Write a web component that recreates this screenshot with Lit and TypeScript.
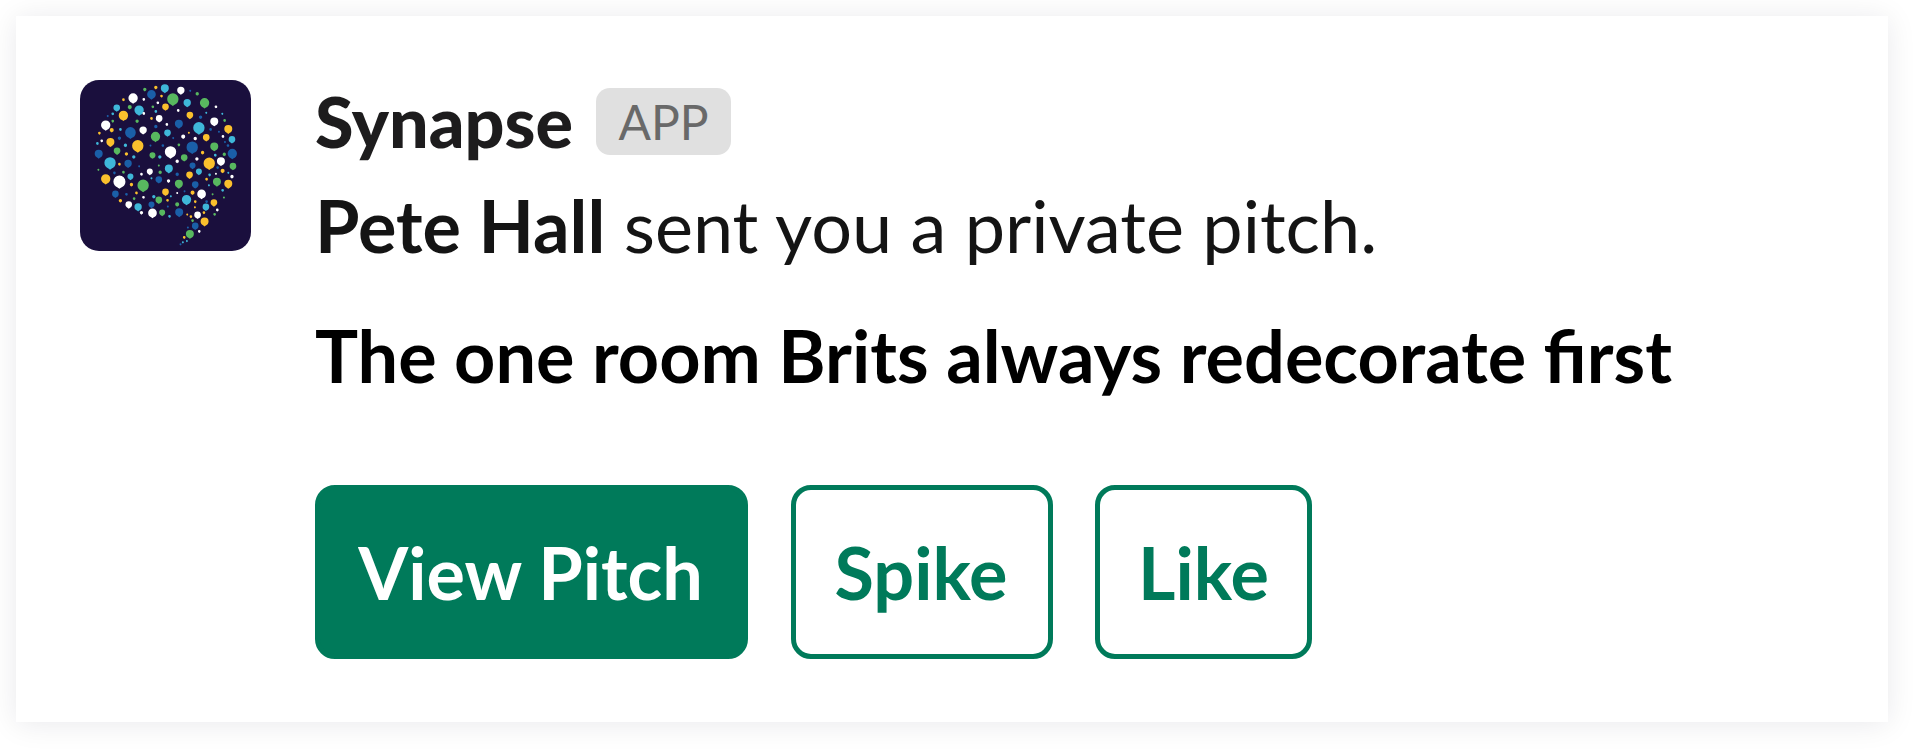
import { LitElement, html, css, svg } from "lit";
import { customElement } from "lit/decorators.js";

const COL: Record<string, string> = { W: "#ffffff", B: "#1a5fa8", C: "#3fb7d9", G: "#58b85f", Y: "#fbc02d" };
const DOTS: [number, number, number, string][] = [
[314,85,10,"C"],[362,91,9,"W"],[274,103,11,"B"],[338,117,15,"G"],[219,114,12,"W"],[433,128,12,"G"],[381,128,9,"C"],[170,143,8,"C"],[237,150,12,"C"],[190,166,12,"Y"],[316,140,8,"Y"],[389,165,8,"Y"],[297,175,8,"W"],[462,184,10,"W"],[137,195,12,"W"],[356,191,10,"B"],[416,203,15,"C"],[504,207,10,"Y"],[211,217,14,"B"],[249,210,9,"W"],[322,218,8,"C"],[286,229,12,"G"],[438,232,8,"Y"],[515,238,8,"C"],[151,246,10,"Y"],[233,257,15,"Y"],[396,261,15,"B"],[462,259,10,"G"],[116,281,10,"B"],[171,272,8,"G"],[331,275,15,"W"],[516,280,12,"B"],[277,285,7,"G"],[372,292,8,"G"],[150,308,15,"C"],[204,310,9,"B"],[447,309,15,"Y"],[482,303,10,"W"],[518,318,8,"G"],[326,325,10,"C"],[416,334,7,"C"],[269,334,7,"W"],[397,316,7,"B"],[388,344,8,"Y"],[137,356,12,"Y"],[178,364,16,"W"],[211,349,7,"C"],[249,375,15,"G"],[296,358,8,"B"],[356,371,10,"G"],[405,373,8,"B"],[470,365,10,"G"],[504,371,10,"Y"],[316,395,8,"Y"],[424,401,11,"W"],[166,401,8,"B"],[234,440,9,"C"],[206,433,8,"W"],[296,419,8,"G"],[379,418,12,"C"],[461,427,8,"Y"],[437,440,8,"C"],[277,458,11,"W"],[306,457,7,"G"],[357,456,10,"B"],[412,464,8,"W"],[433,484,10,"Y"],[405,497,8,"B"],[389,521,10,"G"],[274,433,7,"B"],
[254,88,4,"G"],[287,82,4,"Y"],[411,101,4,"G"],[390,92,2,"B"],
[190,119,3,"Y"],[251,118,3,"W"],[304,108,3,"Y"],[293,128,3,"W"],[278,140,3,"G"],[209,141,5,"G"],[251,160,3,"W"],[287,154,3,"C"],[158,161,3,"C"],[143,168,2,"B"],[274,175,3,"Y"],[354,151,3,"W"],[438,158,2,"C"],[467,140,3,"W"],[486,161,2,"C"],[421,171,4,"B"],[493,181,3,"G"],[158,183,3,"G"],[231,183,4,"G"],[320,193,3,"W"],[287,199,4,"B"],[155,210,5,"Y"],[181,208,3,"C"],[118,219,3,"Y"],[451,208,3,"B"],[339,234,2,"B"],[369,229,5,"W"],[386,218,2,"Y"],[405,235,4,"W"],[476,215,2,"B"],[488,229,3,"W"],[125,242,3,"W"],[178,234,4,"B"],[112,250,3,"C"],[196,255,4,"C"],[308,256,3,"B"],[271,256,2,"B"],[356,254,3,"G"],[494,246,2,"B"],[503,256,3,"B"],[427,277,4,"Y"],[199,281,4,"Y"],[221,290,4,"C"],[299,290,4,"C"],[492,282,4,"G"],[351,303,4,"W"],[410,296,4,"W"],[465,285,3,"C"],[178,312,3,"Y"],[237,318,2,"B"],[115,329,2,"G"],[472,322,3,"B"],[487,332,5,"Y"],[504,338,2,"C"],[515,349,4,"W"],[163,338,3,"B"],[190,336,3,"G"],[244,342,3,"W"],[296,316,2,"G"],[300,336,4,"G"],[351,342,4,"B"],[448,344,3,"C"],[467,341,2,"W"],[439,357,3,"Y"],[325,362,4,"W"],[274,354,2,"C"],[214,373,4,"Y"],[446,375,2,"C"],[487,390,3,"C"],[351,398,2,"W"],[373,393,2,"B"],[397,397,5,"Y"],[457,402,2,"G"],[491,412,2,"G"],[199,402,3,"B"],[229,398,3,"Y"],[250,411,3,"W"],[281,409,4,"C"],[222,415,3,"G"],[181,421,4,"Y"],[322,420,3,"Y"],[332,408,2,"C"],[351,432,5,"G"],[405,424,3,"Y"],[404,441,2,"Y"],[323,439,2,"B"],[471,449,3,"W"],[463,462,3,"G"],[244,457,4,"W"],[328,468,3,"C"],[381,463,2,"Y"],[392,469,3,"Y"],[431,457,3,"Y"],[397,481,3,"G"],[417,513,3,"W"],[383,502,2,"B"],[372,531,3,"Y"],[380,542,2,"C"],[368,546,2,"C"],[361,552,2,"B"],[439,424,3,"B"]
];

@customElement("app-root")
export class AppRoot extends LitElement {
  static styles = css`
    :host { display: block; width: 1920px; height: 754px; background: #fff; overflow: hidden; box-sizing: border-box; padding: 16px 32px 32px 16px; font-family: Lato, "Liberation Sans", sans-serif; }
    .card { height: 100%; box-sizing: border-box; background: #fff; box-shadow: 0 2px 28px rgba(10,10,40,.09); display: flex; align-items: flex-start; gap: 65px; padding: 64px 0 0 64px; }
    .avatar { width: 171px; height: 171px; flex: none; border-radius: 19px; display: block; }
    .body { display: flex; flex-direction: column; align-items: flex-start; margin-left: -1px; }
    .head { display: flex; align-items: center; gap: 23px; height: 84px; margin-top: -1px; }
    .name { font-size: 70px; font-weight: 900; color: #1d1c1d; line-height: 84px; }
    .badge { width: 135px; height: 67px; border-radius: 14px; background: #e0e0e0; color: #696969; font-size: 48px; line-height: 67px; text-align: center; }
    .line { font-size: 72px; color: #141414; line-height: 86px; margin-top: 19px; white-space: nowrap; }
    .line b { font-weight: 700; }
    .title { font-size: 72px; font-weight: 700; color: #000; line-height: 86px; margin-top: 44px; white-space: nowrap; }
    .actions { display: flex; gap: 43px; margin-top: 87px; }
    .btn { box-sizing: border-box; height: 174px; display: flex; align-items: center; justify-content: center; border-radius: 20px; font-size: 72px; font-weight: 700; border: 5.5px solid #007a5a; color: #007a5a; background: #fff; padding: 0 2px 0 0; }
    .primary { width: 433px; background: #007a5a; color: #fff; }
    .spike { width: 262px; }
    .like { width: 217px; margin-left: -1px; padding: 0; }
  `;

  private dot([x, y, r0, c]: [number, number, number, string]) {
    const r = r0 + (r0 >= 7 ? 2 : 1);
    const t = r * 1.22;
    return svg`<path fill=${COL[c]} d="M${x - r} ${y}a${r} ${r} 0 1 1 ${2 * r} 0c0 ${r * 0.6} ${-r * 0.4} ${r * 0.9} ${-r * 0.7} ${r}L${x} ${y + t}L${x - r * 0.3} ${y + r}C${x - r * 0.7} ${y + r * 0.8} ${x - r} ${y + r * 0.5} ${x - r} ${y}z"/>`;
  }

  render() {
    return html`<div class="card">
      <svg class="avatar" viewBox="60 60 512 512" xmlns="http://www.w3.org/2000/svg">
        <rect x="60" y="60" width="512" height="512" fill="#1a0f3d"/>
        ${DOTS.map((d) => this.dot(d))}
      </svg>
      <div class="body">
        <div class="head"><span class="name">Synapse</span><span class="badge">APP</span></div>
        <div class="line"><b>Pete Hall</b> sent you a private pitch.</div>
        <div class="title">The one room Brits always redecorate first</div>
        <div class="actions">
          <div class="btn primary">View Pitch</div>
          <div class="btn spike">Spike</div>
          <div class="btn like">Like</div>
        </div>
      </div>
    </div>`;
  }
}
